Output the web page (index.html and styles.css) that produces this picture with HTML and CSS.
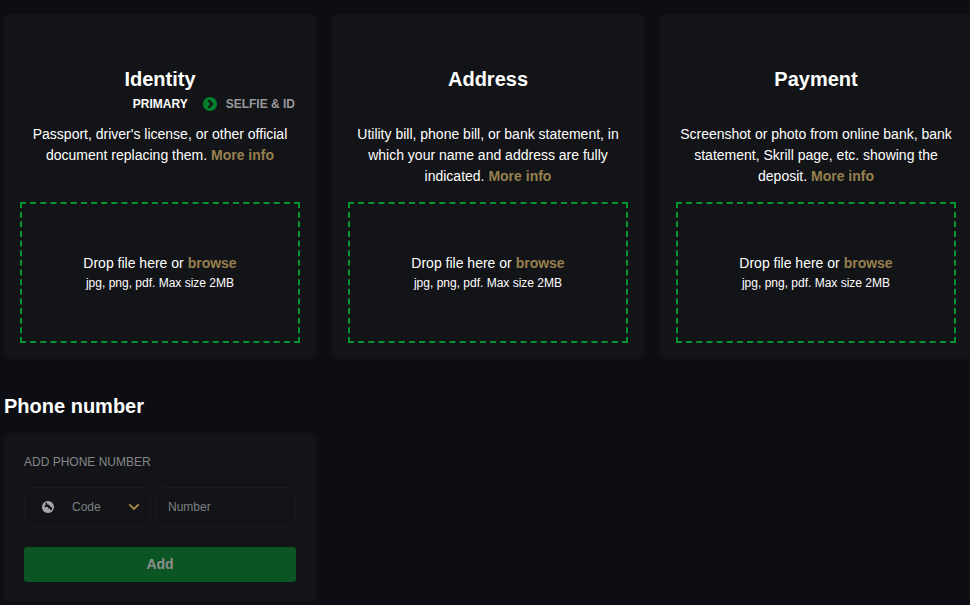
FILE: index.html
```html
<!DOCTYPE html>
<html lang="en">
<head>
    <meta charset="UTF-8">
    <meta name="viewport" content="width=device-width, initial-scale=1.0">
    <title>Verification</title>
    <link rel="stylesheet" href="styles.css">
</head>
<body>
    <div class="documents">
        <div class="card">
            <h2>Identity</h2>
            <div class="steps">
                <span class="step active">PRIMARY</span>
                <svg class="step-arrow" width="14" height="14" viewBox="0 0 14 14">
                    <circle cx="7" cy="7" r="7" fill="#067f2b"/>
                    <path d="M5.4 3.4L9 7L5.4 10.6" fill="none" stroke="#131417" stroke-width="2.2"/>
                </svg>
                <span class="step">SELFIE &amp; ID</span>
            </div>
            <p class="description">Passport, driver's license, or other official document replacing them. <a href="#">More info</a></p>
            <div class="dropzone">
                <div>Drop file here or <a href="#">browse</a></div>
                <small>jpg, png, pdf. Max size 2MB</small>
            </div>
        </div>
        <div class="card">
            <h2>Address</h2>
            <div class="steps"></div>
            <p class="description">Utility bill, phone bill, or bank statement, in which your name and address are fully indicated. <a href="#">More info</a></p>
            <div class="dropzone">
                <div>Drop file here or <a href="#">browse</a></div>
                <small>jpg, png, pdf. Max size 2MB</small>
            </div>
        </div>
        <div class="card">
            <h2>Payment</h2>
            <div class="steps"></div>
            <p class="description">Screenshot or photo from online bank, bank statement, Skrill page, etc. showing the deposit. <a href="#">More info</a></p>
            <div class="dropzone">
                <div>Drop file here or <a href="#">browse</a></div>
                <small>jpg, png, pdf. Max size 2MB</small>
            </div>
        </div>
    </div>

    <h2 class="section-title">Phone number</h2>
    <form class="phone-card">
        <div class="phone-label">ADD PHONE NUMBER</div>
        <div class="phone-fields">
            <div class="code-select">
                <svg class="globe" width="12" height="12" viewBox="0 0 12 12">
                    <circle cx="6" cy="6" r="6" fill="#a5a6a8"/>
                    <path d="M3.4 2L5.4 1.8L4.8 3.2L7 3.8L8.2 5.6L10 6.6L10.2 8.6L8.8 9.2L7.6 7.8L6.2 7.2L5.4 5.8L3.6 6.2L2.2 5.6L3.6 4Z" fill="#131417"/>
                </svg>
                <span>Code</span>
                <svg class="chevron" width="12" height="8" viewBox="0 0 12 8">
                    <path d="M1.3 1.3L6 6L10.7 1.3" fill="none" stroke="#a98d4b" stroke-width="1.8"/>
                </svg>
            </div>
            <input type="text" class="number-input" placeholder="Number">
        </div>
        <button type="button">Add</button>
    </form>
</body>
</html>
```
FILE: styles.css
```css
* {
    box-sizing: border-box;
}
body {
    margin: 0;
    padding: 14px 4px 0;
    height: 605px;
    overflow: hidden;
    background: #0d0e13;
    color: #fff;
    font-family: Arial, "Liberation Sans", sans-serif;
    font-size: 14px;
    line-height: 21px;
}
h2 {
    margin: 0;
    font-size: 20px;
    line-height: 30px;
    font-weight: 700;
}
a {
    color: #96804f;
    font-weight: 700;
    text-decoration: none;
}
.documents {
    display: grid;
    grid-template-columns: repeat(3, 312px);
    gap: 16px;
}
.card {
    height: 345px;
    padding: 50px 16px 16px;
    background: #131417;
    border-radius: 4px;
    text-align: center;
    display: flex;
    flex-direction: column;
}
.steps {
    display: flex;
    align-items: center;
    justify-content: flex-end;
    height: 20px;
    padding-right: 5px;
    font-size: 12px;
    font-weight: 700;
}
.step {
    color: #98999b;
}
.step.active {
    color: #fff;
}
.step-arrow {
    margin: 0 9px 0 15px;
}
.description {
    margin: 10px 0 0;
}
.dropzone {
    height: 141px;
    margin-top: auto;
    border: 2px dashed #079330;
    display: flex;
    flex-direction: column;
    justify-content: center;
}
.dropzone small {
    font-size: 12px;
    line-height: 18px;
}
.section-title {
    margin-top: 32px;
}
.phone-card {
    width: 312px;
    height: 169px;
    margin-top: 12px;
    padding: 20px;
    background: #131417;
    border-radius: 4px;
}
.phone-label {
    font-size: 12px;
    line-height: 18px;
    color: #858688;
}
.phone-fields {
    display: flex;
    gap: 5px;
    margin: 16px 0 20px;
}
.code-select {
    display: flex;
    align-items: center;
    width: 127px;
    height: 40px;
    padding: 0 10px 0 17px;
    border: 1px solid #1a1b1f;
    border-radius: 8px;
    color: #7e7f81;
    font-size: 12px;
}
.code-select span {
    margin-left: 18px;
}
.chevron {
    margin-left: auto;
}
.number-input {
    width: 140px;
    height: 40px;
    padding: 0 11px;
    background: transparent;
    border: 1px solid #1a1b1f;
    border-radius: 8px;
    color: #fff;
    font-family: inherit;
    font-size: 12px;
}
.number-input::placeholder {
    color: #7e7f81;
}
button {
    display: block;
    width: 100%;
    height: 35px;
    padding: 0 0 2px;
    background: #0b5424;
    color: #8b8f8d;
    border: none;
    border-radius: 3px;
    font-family: inherit;
    font-size: 14px;
    font-weight: 700;
    cursor: pointer;
}
```
